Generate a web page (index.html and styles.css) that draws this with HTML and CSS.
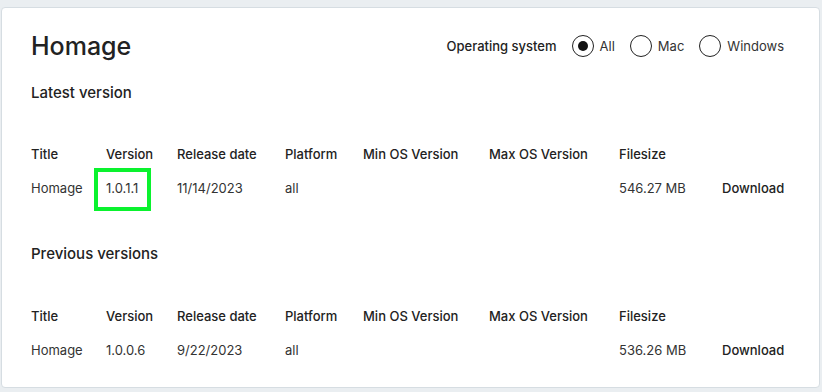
FILE: index.html
```html
<!DOCTYPE html>
<html lang="en">
<head>
    <meta charset="UTF-8">
    <title>Homage - Downloads</title>
    <link rel="stylesheet" href="styles.css">
</head>
<body>
    <div class="card">
        <div class="card-header">
            <h1>Homage</h1>
            <div class="os-filter">
                <span class="os-label">Operating system</span>
                <label class="radio"><span class="circle checked"></span>All</label>
                <label class="radio"><span class="circle"></span>Mac</label>
                <label class="radio"><span class="circle"></span>Windows</label>
            </div>
        </div>

        <h2>Latest version</h2>
        <div class="versions">
            <div class="th">Title</div>
            <div class="th">Version</div>
            <div class="th">Release date</div>
            <div class="th">Platform</div>
            <div class="th">Min OS Version</div>
            <div class="th">Max OS Version</div>
            <div class="th">Filesize</div>
            <div class="th"></div>

            <div class="td">Homage</div>
            <div class="td highlight">1.0.1.1</div>
            <div class="td">11/14/2023</div>
            <div class="td">all</div>
            <div class="td"></div>
            <div class="td"></div>
            <div class="td">546.27 MB</div>
            <div class="td"><a class="download" href="#">Download</a></div>
        </div>

        <h2 class="previous">Previous versions</h2>
        <div class="versions">
            <div class="th">Title</div>
            <div class="th">Version</div>
            <div class="th">Release date</div>
            <div class="th">Platform</div>
            <div class="th">Min OS Version</div>
            <div class="th">Max OS Version</div>
            <div class="th">Filesize</div>
            <div class="th"></div>

            <div class="td">Homage</div>
            <div class="td">1.0.0.6</div>
            <div class="td">9/22/2023</div>
            <div class="td">all</div>
            <div class="td"></div>
            <div class="td"></div>
            <div class="td">536.26 MB</div>
            <div class="td"><a class="download" href="#">Download</a></div>
        </div>
    </div>
</body>
</html>
```

FILE: styles.css
```css
body {
    font-family: Inter, "Noto Sans", sans-serif;
    margin: 0;
    padding: 7px 2px 4px 1px;
    background: #eaeef1;
    color: #333;
    height: 392px;
    box-sizing: border-box;
}
.card {
    background: #fff;
    border: 1px solid #d6dde2;
    border-radius: 4px;
    padding: 22px 35px 0 29px;
    height: 100%;
    box-sizing: border-box;
}
.card-header {
    display: flex;
    justify-content: space-between;
    align-items: center;
}
h1 {
    margin: 0;
    font-size: 25px;
    line-height: 32px;
    font-weight: 500;
    color: #222;
}
h2 {
    margin: 21px 0 0;
    font-size: 15px;
    line-height: 20px;
    font-weight: 500;
    color: #222;
}
h2.previous { margin-top: 39px; }

/* OS radio filter */
.os-filter {
    display: flex;
    align-items: center;
    font-size: 13px;
    color: #333;
}
.os-label {
    font-weight: 500;
    color: #222;
    margin-right: 15px;
}
.radio {
    display: flex;
    align-items: center;
    gap: 6px;
    margin-right: 15px;
}
.radio:last-child { margin-right: 0; }
.circle {
    width: 22px;
    height: 22px;
    border: 1.5px solid #222;
    border-radius: 50%;
    box-sizing: border-box;
    display: flex;
    align-items: center;
    justify-content: center;
}
.circle.checked::before {
    content: "";
    width: 10px;
    height: 10px;
    border-radius: 50%;
    background: #111;
}

/* Version tables */
.versions {
    display: grid;
    grid-template-columns: 75px 71px 108px 78px 126px 130px 103px auto;
    margin-top: 34px;
    font-size: 13px;
}
.versions:last-child { margin-top: 35px; }
.th, .td {
    line-height: 20px;
    padding: 7px 0;
    white-space: nowrap;
}
.th {
    font-weight: 500;
    color: #222;
}
.download {
    color: #222;
    font-weight: 500;
    text-decoration: none;
}
.highlight { position: relative; }
.highlight::after {
    content: "";
    position: absolute;
    left: -12px;
    top: -3px;
    width: 57px;
    height: 43px;
    border: 4px solid #0af22e;
    box-sizing: border-box;
}
```
